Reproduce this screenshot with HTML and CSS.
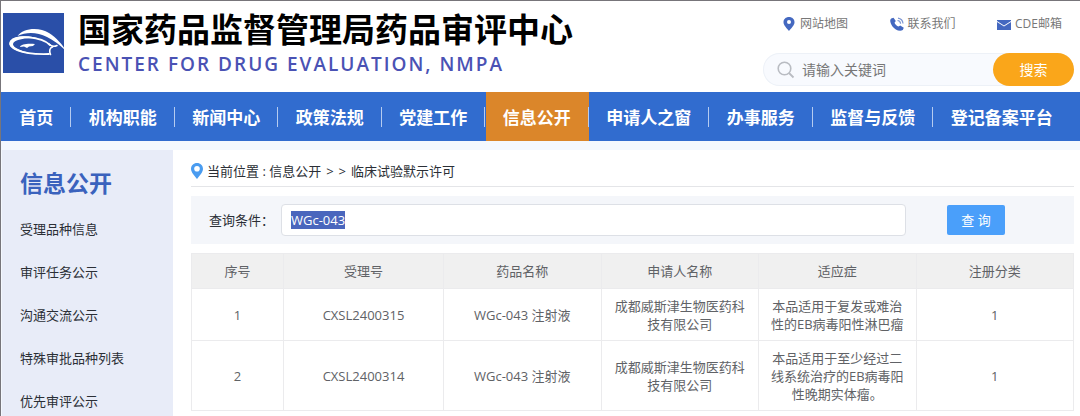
FILE: index.html
```html
<!DOCTYPE html>
<html lang="zh-CN">
<head>
<meta charset="utf-8">
<title>国家药品监督管理局药品审评中心</title>
<link rel="stylesheet" href="styles.css">
</head>
<body>
<div class="page">
  <header class="header">
    <svg class="logo" viewBox="0 0 64 60" aria-hidden="true">
      <rect width="61" height="60" fill="#2a4fa8"/>
      <path d="M14.500 23C20 15 36 13.500 46 20C53 24.500 60 32 63 38C56 31 50 27 44 24C34 19 23 19 14.500 23Z" fill="#fff"/>
      <path d="M47 32C38 23 13 22 8 28C4 34 16 42 46 41" fill="none" stroke="#fff" stroke-width="1.800" stroke-linecap="round"/>
      <path d="M7 29C10 23 24 22 34 25C23 25 11 26 10 31C10 36 24 40 36 41.500C19 41 3 35 7 29Z" fill="#fff"/>
      <path d="M46 31C48 33 51 34 54 32.500M49.500 34C46.500 35 46 38 47.500 41.500" fill="none" stroke="#fff" stroke-width="1.600" stroke-linecap="round"/>
      <path d="M17 34C18 31 24 30.500 32 31L30 33L26 33.500L24 35L21 33.500Z" fill="#fff"/>
    </svg>
    <div class="brand">
      <h1 class="brand-name">国家药品监督管理局药品审评中心</h1>
      <p class="brand-en">CENTER FOR DRUG EVALUATION, NMPA</p>
    </div>
    <div class="tools">
      <div class="links">
        <a href="#"><svg class="ico" viewBox="0 0 14 14" aria-hidden="true"><path d="M7 0C3.800 0 1.500 2.200 1.500 5.200C1.500 8.300 5 11.500 7 14C9 11.500 12.500 8.300 12.500 5.200C12.500 2.200 10.200 0 7 0Z" fill="#4468c0"/><circle cx="7" cy="5" r="2" fill="#fff"/></svg>网站地图</a>
        <a href="#"><svg class="ico" viewBox="0 0 14 14" aria-hidden="true"><path d="M1.200 1.500L3.500.7L5.800 4L4.500 5.800C5.200 7.500 6.700 9 8.500 9.600L10.200 8.400L13.800 10.700L12.800 13C9.500 15.200 4.600 12.200 2.500 9.500C.5 6.500-.8 3 1.200 1.500Z" fill="#4468c0"/><path d="M7.500 3.500A3.500 3.500 0 0 1 10.600 6.700M8 1.200A6 6 0 0 1 13 6.500" fill="none" stroke="#7d96d2" stroke-width="1.200"/></svg>联系我们</a>
        <a href="#"><svg class="ico" viewBox="0 0 14 14" aria-hidden="true"><path d="M0 3H14V4L7 8.500L0 4Z" fill="#4468c0"/><path d="M0 5L7 9.500L14 5V13H0Z" fill="#4468c0"/></svg>CDE邮箱</a>
      </div>
      <form class="search">
        <svg class="search-ico" viewBox="0 0 18 18" aria-hidden="true"><circle cx="7.500" cy="7.500" r="6.300" fill="none" stroke="#b9bcc2" stroke-width="1.600"/><path d="M12 12L16.500 16.500" stroke="#b9bcc2" stroke-width="1.800"/></svg>
        <input class="search-input" type="text" placeholder="请输入关键词" aria-label="请输入关键词">
        <button class="search-btn" type="button">搜索</button>
      </form>
    </div>
  </header>
  <nav class="nav">
    <a href="#">首页</a>
    <a href="#">机构职能</a>
    <a href="#">新闻中心</a>
    <a href="#">政策法规</a>
    <a href="#">党建工作</a>
    <a class="active" href="#">信息公开</a>
    <a href="#">申请人之窗</a>
    <a href="#">办事服务</a>
    <a href="#">监督与反馈</a>
    <a href="#">登记备案平台</a>
  </nav>
  <div class="body">
    <aside class="side">
      <h2 class="side-title">信息公开</h2>
      <a href="#">受理品种信息</a>
      <a href="#">审评任务公示</a>
      <a href="#">沟通交流公示</a>
      <a href="#">特殊审批品种列表</a>
      <a href="#">优先审评公示</a>
    </aside>
    <main class="main">
      <div class="crumbs">
        <svg class="crumb-ico" viewBox="0 0 12 16" aria-hidden="true"><path d="M6 0C2.600 0 0 2.500 0 5.900C0 9.400 4 12.800 6 16C8 12.800 12 9.400 12 5.900C12 2.500 9.400 0 6 0Z" fill="#4a9cf0"/><circle cx="6" cy="5.800" r="2.800" fill="#fff"/></svg>
        <span>当前位置 : 信息公开</span><span>&gt;</span><span>&gt;</span><span>临床试验默示许可</span>
      </div>
      <form class="query">
        <label for="q">查询条件：</label>
        <input id="q" class="query-input" type="text" value="WGc-043">
        <button class="query-btn" type="button">查 询</button>
      </form>
      <table class="table">
        <colgroup><col class="c-no"><col class="c-id"><col class="c-std"><col class="c-std"><col class="c-std"><col class="c-std"></colgroup>
        <thead>
          <tr><th>序号</th><th>受理号</th><th>药品名称</th><th>申请人名称</th><th>适应症</th><th>注册分类</th></tr>
        </thead>
        <tbody>
          <tr><td>1</td><td>CXSL2400315</td><td>WGc-043 注射液</td><td>成都威斯津生物医药科技有限公司</td><td>本品适用于复发或难治性的EB病毒阳性淋巴瘤</td><td>1</td></tr>
          <tr><td>2</td><td>CXSL2400314</td><td>WGc-043 注射液</td><td>成都威斯津生物医药科技有限公司</td><td>本品适用于至少经过二线系统治疗的EB病毒阳性晚期实体瘤。</td><td>1</td></tr>
        </tbody>
      </table>
    </main>
  </div>
</div>
<script src="main.js"></script>
</body>
</html>
```
FILE: styles.css
```css
* { box-sizing: border-box; }
html { overflow: hidden; }
body {
  margin: 0;
  background: #f4f8fe;
  color: #2b2f36;
  font: 13px/18px "Open Sans", "Noto Sans CJK SC", sans-serif;
}
a { color: inherit; text-decoration: none; }
input, button { font: inherit; border: 0; margin: 0; }
.page {
  min-height: 100vh;
  border-top: 1px solid #77757a;
  border-left: 1px solid #77757a;
}
.header {
  display: flex;
  background: #fff;
  height: 91px;
  padding: 12px 6px 0 2px;
}
.logo { width: 64px; height: 60px; flex: none; }
.brand { flex: 1; padding-left: 11px; }
.brand-name {
  margin: 0;
  color: #000;
  font: bold 33px/30px "Noto Sans CJK SC", sans-serif;
  white-space: nowrap;
}
.brand-en {
  margin: 6px 0 0;
  color: #4a52b4;
  font-size: 19px;
  font-weight: 600;
  line-height: 30px;
  letter-spacing: 2px;
  white-space: nowrap;
}
.tools { width: 311px; flex: none; }
.links {
  display: flex;
  justify-content: space-between;
  padding: 1px 12px 0 19px;
  color: #777;
  font-size: 12px;
  line-height: 20px;
}
.links a { display: flex; align-items: center; gap: 4px; }
.ico { width: 14px; height: 14px; }
.search {
  display: flex;
  align-items: center;
  height: 33px;
  margin-top: 19px;
  padding-left: 14px;
  border-radius: 17px;
  background: #f8fafe;
  box-shadow: inset 0 0 0 1px #edf1f7;
}
.search-ico { width: 18px; height: 18px; flex: none; }
.search-input {
  flex: 1;
  min-width: 0;
  padding: 0 7px;
  background: none;
  font-size: 14px;
  outline: 0;
}
.search-input::placeholder { color: #777; opacity: 1; }
.search-btn {
  width: 81px;
  height: 33px;
  border-radius: 17px;
  background: #faa61a;
  color: #fff;
  font-size: 14px;
}
.nav {
  display: flex;
  height: 49px;
  padding: 0 9px 0 1px;
  background: #316ccf;
  color: #fff;
  font: bold 17px/48px "Noto Sans CJK SC", sans-serif;
}
.nav a {
  display: flex;
  flex: 1 1 auto;
  justify-content: center;
  align-items: center;
  padding-left: 17px;
  white-space: nowrap;
}
.nav a::after {
  content: "";
  width: 1px;
  height: 20px;
  margin-left: 17px;
  background: #b5cbf0;
}
.nav a:last-child::after { background: none; }
.nav .active { background: #db862a; }
.body { display: flex; padding: 9px 0 0 1px; }
.side {
  display: flex;
  flex-direction: column;
  width: 171px;
  flex: none;
  padding: 15px 0 0 18px;
  background: #e8ecf8;
}
.side-title {
  margin: 0 0 8px;
  color: #3a62bd;
  font: bold 23px/35px "Noto Sans CJK SC", sans-serif;
}
.side a { line-height: 43px; }
.main {
  flex: 1;
  min-width: 0;
  min-height: 266px;
  padding: 6px 6px 4px 18px;
  background: #fff;
}
.crumbs {
  display: flex;
  align-items: center;
  gap: 5px;
  height: 31px;
  border-bottom: 1px solid #e4e5e8;
}
.crumb-ico { width: 12px; height: 16px; margin-right: -1px; }
.query {
  display: flex;
  align-items: center;
  height: 48px;
  margin: 9px 0;
  padding: 0 69px 0 18px;
  background: #f4f6fa;
}
.query label { width: 72px; flex: none; white-space: nowrap; }
.query-input {
  flex: 1;
  min-width: 0;
  height: 32px;
  padding: 0 9px;
  border: 1px solid #dde0e6;
  border-radius: 4px;
  background: #fff;
  color: #444;
  outline: 0;
}
.query-input::selection { background: #4a66bd; color: #fff; }
.query-btn {
  width: 58px;
  height: 30px;
  margin-left: 41px;
  border-radius: 2px;
  background: #4a9ffa;
  color: #fff;
}
.table {
  width: 100%;
  border-collapse: collapse;
  table-layout: fixed;
  color: #606266;
  text-align: center;
}
.c-no { width: 92px; }
.c-id { width: 160px; }
.table th, .table td { border: 1px solid #ebebed; }
.table th { height: 35px; padding: 0; background: #f0f0f0; font-weight: 400; }
.table td { padding: 8px 10px 7px; }
```
FILE: main.js
```js
// Preselect the current query so typing replaces it.
const query = document.getElementById("q");
query.focus();
query.select();
```
